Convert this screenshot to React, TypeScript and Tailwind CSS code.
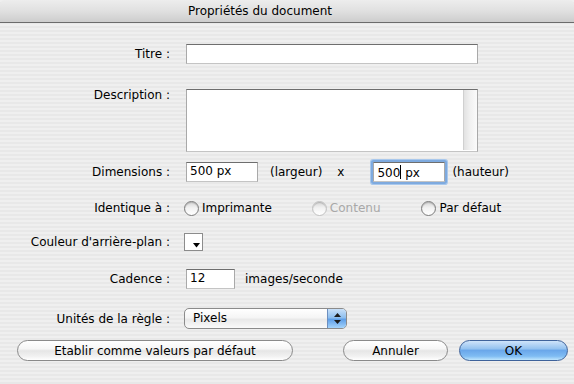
import clsx from 'clsx';

const fieldBorder = 'border border-[#a9a9a9] border-t-[#6e6e6e] border-b-[#c4c4c4] bg-white';

function Label({ children }: { children: React.ReactNode }) {
  return <div className="w-[170px] shrink-0 text-right whitespace-nowrap">{children}</div>;
}

function Field({ width, children, focused }: { width: string; children?: React.ReactNode; focused?: boolean }) {
  return (
    <div
      className={clsx(
        'h-[20px] shrink-0 px-[3px] leading-[17px] whitespace-pre',
        fieldBorder,
        width,
        focused && 'rounded-[1px] shadow-[0_0_0_2px_#7eaadf,0_0_0_3px_#a9c8ec]'
      )}
    >
      {children}
    </div>
  );
}

function Radio({ label, disabled }: { label: string; disabled?: boolean }) {
  return (
    <div className={clsx('flex items-center gap-[3px]', disabled && 'text-[#a8a8a8]')}>
      <span
        className={clsx(
          'h-[15px] w-[15px] rounded-full border bg-[image:linear-gradient(180deg,#d6d6d6_0%,#f2f2f2_45%,#ffffff_100%)] shadow-[inset_0_1px_1px_rgba(0,0,0,0.18)]',
          disabled ? 'border-[#c2c2c2]' : 'border-[#7c7c7c]'
        )}
      />
      <span>{label}</span>
    </div>
  );
}

function Button({ children, width, primary }: { children: React.ReactNode; width: string; primary?: boolean }) {
  return (
    <div
      className={clsx(
        'flex h-[21px] shrink-0 items-center justify-center rounded-full border',
        width,
        primary
          ? 'border-[#3f639b] bg-[image:linear-gradient(180deg,#cfe4fa_0%,#96c3f0_40%,#6aa7ea_50%,#7fbcf3_80%,#bfe6fd_100%)]'
          : 'border-[#8a8a8a] bg-[image:linear-gradient(180deg,#ffffff_0%,#f6f6f6_40%,#e6e6e6_52%,#f1f1f1_80%,#ffffff_100%)]'
      )}
    >
      {children}
    </div>
  );
}

export default function App() {
  return (
    <div className="h-[384px] w-[574px] overflow-hidden bg-[image:repeating-linear-gradient(180deg,#efefef_0px,#efefef_2px,#e8e8e8_2px,#e8e8e8_4px)] font-['DejaVu_Sans',sans-serif] text-[12px] text-black">
      {/* barre de titre */}
      <div className="flex h-[23px] items-center justify-center rounded-t-[5px] border-b border-[#6b6b6b] bg-[image:linear-gradient(180deg,#ededed_0%,#e0e0e0_50%,#cdcdcd_100%)] pr-[54px] text-[12px]">
        Propriétés du document
      </div>

      <div className="flex flex-col">
        {/* Titre */}
        <div className="mt-[21px] flex items-center gap-[16px]">
          <Label>Titre :</Label>
          <Field width="w-[292px]" />
        </div>

        {/* Description */}
        <div className="mt-[25px] flex items-start gap-[16px]">
          <div className="-mt-[3px]">
            <Label>Description :</Label>
          </div>
          <div className={clsx('flex h-[63px] w-[292px]', fieldBorder)}>
            <div className="flex-1" />
            <div className="mb-[1px] w-[14px] border-l border-[#d0d0d0] bg-[image:linear-gradient(90deg,#e2e2e2_0%,#f2f2f2_50%,#fbfbfb_100%)]" />
          </div>
        </div>

        {/* Dimensions */}
        <div className="mt-[10px] flex items-center gap-[16px]">
          <Label>Dimensions :</Label>
          <Field width="w-[72px]">500 px</Field>
          <span className="ml-[-4px]">(largeur)</span>
          <span className="ml-[-1px]">x</span>
          <div className="ml-[13px]">
            <Field width="w-[72px]" focused>
              500<span className="inline-block h-[14px] w-px translate-y-[2px] bg-black" />{' px'}
            </Field>
          </div>
          <span className="ml-[-9px]">(hauteur)</span>
        </div>

        {/* Identique à */}
        <div className="mt-[17px] flex items-center gap-[14px]">
          <Label>Identique à :</Label>
          <Radio label="Imprimante" />
          <div className="ml-[26px]">
            <Radio label="Contenu" disabled />
          </div>
          <div className="ml-[27px]">
            <Radio label="Par défaut" />
          </div>
        </div>

        {/* Couleur */}
        <div className="mt-[16px] flex items-center gap-[14px]">
          <Label>Couleur d&apos;arrière-plan :</Label>
          <div className="relative h-[18px] w-[19px] border border-[#8c8c8c] bg-white">
            <svg className="absolute right-[2px] bottom-[2px]" width="7" height="5" viewBox="0 0 7 5">
              <path d="M0 0h7L3.5 4.5z" fill="#000" />
            </svg>
          </div>
        </div>

        {/* Cadence */}
        <div className="mt-[18px] flex items-center gap-[16px]">
          <Label>Cadence :</Label>
          <Field width="w-[49px]">12</Field>
          <span className="ml-[-6px]">images/seconde</span>
        </div>

        {/* Unités */}
        <div className="mt-[19px] flex items-center gap-[14px]">
          <Label>Unités de la règle :</Label>
          <div className="flex h-[21px] w-[163px] overflow-hidden rounded-[5px] border border-[#8b8b8b] bg-[image:linear-gradient(180deg,#ffffff_0%,#f5f5f5_45%,#e9e9e9_55%,#fafafa_100%)]">
            <div className="flex-1 pl-[8px] leading-[19px]">Pixels</div>
            <div className="flex w-[19px] items-center justify-center border-l border-[#6d8fbf] bg-[image:linear-gradient(180deg,#c9e0f8_0%,#8ebfef_45%,#5f9fe8_55%,#a5d4fb_100%)]">
              <svg width="7" height="11" viewBox="0 0 7 11">
                <path d="M3.5 0L7 4H0z" fill="#1c1c1c" />
                <path d="M0 7h7L3.5 11z" fill="#1c1c1c" />
              </svg>
            </div>
          </div>
        </div>

        {/* Boutons */}
        <div className="mt-[11px] flex items-center pl-[17px]">
          <Button width="w-[276px]">Etablir comme valeurs par défaut</Button>
          <div className="ml-[50px]">
            <Button width="w-[105px]">Annuler</Button>
          </div>
          <div className="ml-[11px]">
            <Button width="w-[109px]" primary>
              OK
            </Button>
          </div>
        </div>
      </div>
    </div>
  );
}
